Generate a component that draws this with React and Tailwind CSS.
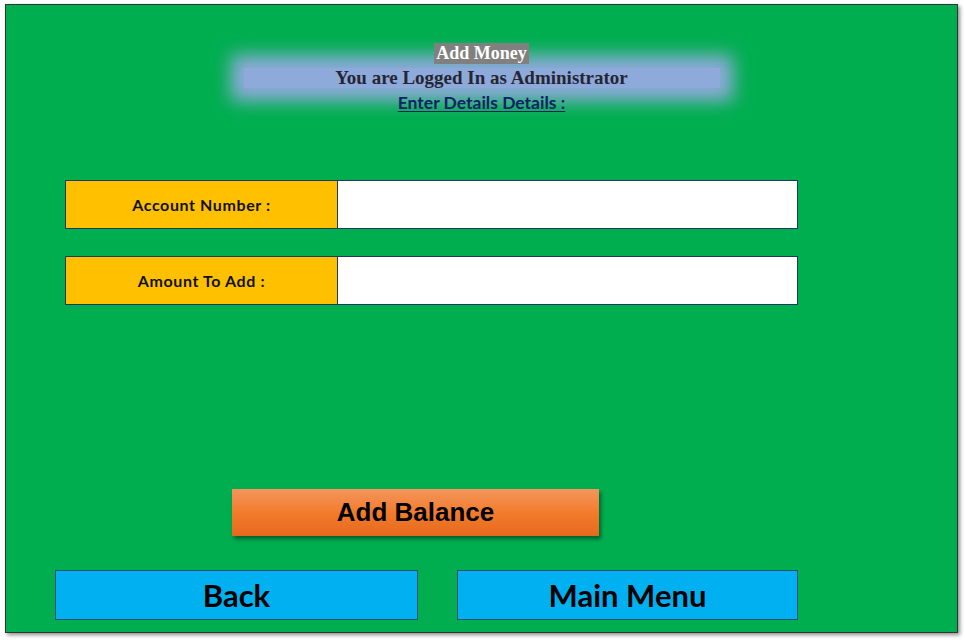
import React from 'react';

const Field = ({ label }) => (
  <div className="flex h-[49px]">
    <div className="flex w-[273px] items-center justify-center border border-[#1f3864] bg-[#ffc000] font-['Lato'] text-[16px] font-bold tracking-[0.6px] text-[#111]">
      {label}
    </div>
    <input
      type="text"
      className="w-[460px] border border-[#1f3864] border-l-0 bg-white outline-none"
    />
  </div>
);

export default function App() {
  return (
    <div className="h-[640px] w-[965px] bg-white pl-[5px] pt-[4px]">
      <div className="flex h-[629px] w-[953px] flex-col border border-[#333] bg-[#00ae50] shadow-[2px_2px_4px_rgba(0,0,0,0.45)]">
        {/* Header */}
        <div className="mt-[38px] flex flex-col items-center">
          <div className="relative z-10 bg-[#808080] px-[2px] font-['Liberation_Serif',serif] text-[18px] font-bold leading-[21px] text-white">
            Add Money
          </div>
          <div className="mt-[4px] w-[476px] bg-[#8eaadb] text-center font-['Liberation_Serif',serif] text-[19px] font-bold leading-[20px] text-[#262633] shadow-[0_0_18px_13px_#8eaadb]">
            You are Logged In as Administrator
          </div>
          <div className="mt-[5px] font-['Lato',sans-serif] text-[17.5px] font-bold leading-[19px] text-[#0a2463] underline underline-offset-2">
            Enter Details Details :
          </div>
        </div>

        {/* Form */}
        <div className="ml-[59px] mt-[68px] flex flex-col gap-[27px]">
          <Field label="Account Number :" />
          <Field label="Amount To Add :" />
        </div>

        {/* Add Balance */}
        <button className="ml-[226px] mt-[184px] h-[47px] w-[367px] bg-gradient-to-b from-[#f3955a] via-[#f37c2c] to-[#e5691d] font-['Liberation_Sans',sans-serif] text-[26px] font-bold text-black shadow-[2px_3px_4px_rgba(0,0,0,0.45)]">
          Add Balance
        </button>

        {/* Bottom buttons */}
        <div className="ml-[49px] mt-[34px] flex gap-[39px]">
          <button className="h-[50px] w-[363px] border border-[#1f4e79] bg-[#00b0f0] font-['Lato',sans-serif] text-[31px] font-bold text-black">
            Back
          </button>
          <button className="h-[50px] w-[341px] border border-[#1f4e79] bg-[#00b0f0] font-['Lato',sans-serif] text-[31px] font-bold text-black">
            Main Menu
          </button>
        </div>
      </div>
    </div>
  );
}
